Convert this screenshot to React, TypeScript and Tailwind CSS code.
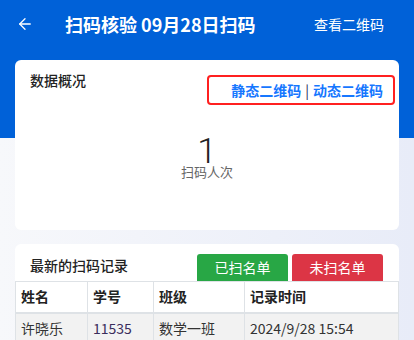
import { ArrowLeft } from 'lucide-react'

const font = { fontFamily: '"Noto Sans CJK SC", "Noto Sans", sans-serif' }

export default function App() {
  return (
    <div
      className="min-h-[340px] w-[414px] overflow-hidden bg-gradient-to-r from-[#f7f8fb] to-[#e8ecf8] text-[#333]"
      style={font}
    >
      <div className="bg-[linear-gradient(to_bottom,#0061d8_138px,transparent_138px)]">
        <div className="flex h-[48px] items-center pl-[16px] pr-[30px] text-white">
          <ArrowLeft size={18} strokeWidth={1.75} />
          <div className="ml-[31px] text-[18px] font-bold leading-none">扫码核验 09月28日扫码</div>
          <div className="ml-auto text-[14px] leading-none">查看二维码</div>
        </div>

        <div className="mx-[15px] mt-[12px] h-[170px] rounded-[6px] bg-white">
          <div className="flex items-start justify-between pl-[15px] pr-[4px] pt-[10px]">
            <div className="text-[14px] font-medium leading-[20px] text-[#222]">数据概况</div>
            <div className="mt-[5px] flex h-[30px] w-[188px] items-center justify-end rounded-[4px] border-2 border-[#ff2020] pr-[10px] text-[14px] font-bold text-[#1677ff]">
              静态二维码 <span className="mx-[4px] font-normal text-[#1e2a55]">|</span> 动态二维码
            </div>
          </div>
          <div className="mt-[34px] flex flex-col items-center">
            <div className="font-['Roboto'] text-[35px] font-light leading-[26px] text-[#222]">1</div>
            <div className="text-[13px] leading-[13px] text-[#666]">扫码人次</div>
          </div>
        </div>
      </div>

      <div className="mx-[15px] mt-[14px] rounded-t-[6px] bg-white">
        <div className="flex items-end justify-between pl-[15px] pr-[16px] pt-[10px]">
          <div className="mb-[6px] text-[14px] font-medium leading-[20px] text-[#222]">最新的扫码记录</div>
          <div className="flex gap-[4px]">
            <div className="flex h-[27px] w-[91px] items-center justify-center rounded-t-[3px] bg-[#28a745] text-[14px] text-white">
              已扫名单
            </div>
            <div className="flex h-[27px] w-[91px] items-center justify-center rounded-t-[3px] bg-[#dc3545] text-[14px] text-white">
              未扫名单
            </div>
          </div>
        </div>
        <table className="w-full border-collapse text-left text-[14px]">
          <colgroup>
            <col className="w-[72px]" />
            <col className="w-[66px]" />
            <col className="w-[91px]" />
            <col />
          </colgroup>
          <thead>
            <tr className="h-[31px]">
              <th className="border border-b-2 border-[#dee2e6] px-[5px] font-bold text-[#222]">姓名</th>
              <th className="border border-b-2 border-[#dee2e6] px-[5px] font-bold text-[#222]">学号</th>
              <th className="border border-b-2 border-[#dee2e6] px-[5px] font-bold text-[#222]">班级</th>
              <th className="border border-b-2 border-[#dee2e6] px-[5px] font-bold text-[#222]">记录时间</th>
            </tr>
          </thead>
          <tbody>
            <tr className="h-[32px] bg-[#f2f2f2]">
              <td className="border border-[#dee2e6] px-[5px]">许晓乐</td>
              <td className="border border-[#dee2e6] px-[5px] text-[#3a2d5c]">11535</td>
              <td className="border border-[#dee2e6] px-[5px]">数学一班</td>
              <td className="border border-[#dee2e6] px-[5px]">2024/9/28 15:54</td>
            </tr>
          </tbody>
        </table>
      </div>
    </div>
  )
}
